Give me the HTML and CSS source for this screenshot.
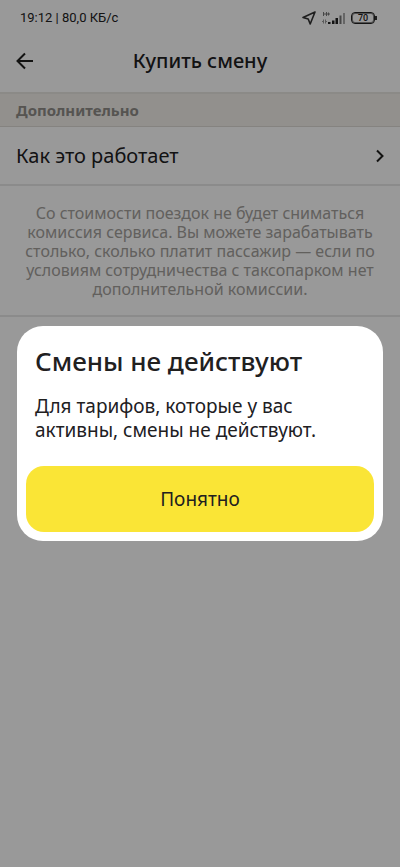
FILE: index.html
```html
<!DOCTYPE html>
<html lang="ru">
<head>
    <meta charset="UTF-8">
    <meta name="viewport" content="width=device-width, initial-scale=1.0">
    <title>Купить смену</title>
    <link rel="stylesheet" href="styles.css">
</head>
<body>
    <div class="status-bar">
        <span>19:12 | 80,0 КБ/с</span>
        <div class="status-icons">
            <svg width="14" height="14" viewBox="0 0 14 14" fill="none" stroke="#333" stroke-width="1.6" stroke-linejoin="round">
                <path d="M13 1L1 6.400L6.200 8L8.200 13Z"/>
            </svg>
            <svg width="25" height="14" viewBox="0 0 25 14">
                <path d="M2.500 1v4M5.500 1v4M2.500 3h6.500M7.500 1.500v3" fill="none" stroke="#777" stroke-width="1"/>
                <path d="M2.500 8.500v4M1 10.500h1.500M4.500 8.500v4M4.500 10.500h1.500" fill="none" stroke="#999" stroke-width="1"/>
                <path d="M7 11h2.500v2H7zM11 9.500h2.500v3.500H11zM14.500 7h2.500v6h-2.500z" fill="#222"/>
                <path d="M18.500 4.500h2v8.500h-2z" fill="#777"/>
                <path d="M22 2h2v11h-2z" fill="#aaa"/>
            </svg>
            <div class="battery">70</div>
        </div>
    </div>

    <header class="header">
        <button class="back" aria-label="Назад">
            <svg width="18" height="18" viewBox="0 0 18 18" fill="none" stroke="#21201f" stroke-width="2">
                <path d="M17 9H2M9 1.500L1.500 9L9 16.500"/>
            </svg>
        </button>
        <h1>Купить смену</h1>
    </header>

    <main>
        <h2 class="section-title">Дополнительно</h2>
        <a class="row" href="#">
            <span>Как это работает</span>
            <svg width="8" height="14" viewBox="0 0 8 14" fill="none" stroke="#21201f" stroke-width="2">
                <path d="M1 1.500L6.500 7L1 12.500"/>
            </svg>
        </a>
        <p class="note">Со стоимости поездок не будет сниматься комиссия сервиса. Вы можете зарабатывать столько, сколько платит пассажир — если по условиям сотрудничества с таксопарком нет дополнительной комиссии.</p>
    </main>

    <div class="overlay">
        <div class="modal" role="dialog" aria-labelledby="modalTitle">
            <h2 id="modalTitle">Смены не действуют</h2>
            <p>Для тарифов, которые у вас активны, смены не действуют.</p>
            <button class="confirm">Понятно</button>
        </div>
    </div>
</body>
</html>
```
FILE: styles.css
```css
* {
    box-sizing: border-box;
    margin: 0;
    padding: 0;
}

body {
    background: #fff;
    color: #21201f;
    font-family: "Noto Sans", sans-serif;
}

.status-bar {
    display: flex;
    justify-content: space-between;
    align-items: center;
    height: 35px;
    padding: 0 25px 0 20px;
    font-family: Roboto, sans-serif;
    font-size: 13px;
    color: #222;
}

.status-icons {
    display: flex;
    align-items: center;
    gap: 5px;
}

.battery {
    position: relative;
    width: 24px;
    height: 12px;
    border: 1px solid #222;
    border-radius: 4px;
    box-shadow: inset 0 0 0 1px #888;
    font-size: 9px;
    font-weight: 500;
    line-height: 10px;
    text-align: center;
}

.battery::after {
    content: "";
    position: absolute;
    top: 3px;
    right: -3px;
    width: 2px;
    height: 4px;
    background: #333;
}

.header {
    display: grid;
    grid-template-columns: 18px 1fr 18px;
    align-items: center;
    height: 57px;
    padding: 0 16px 5px;
}

.header h1 {
    font-size: 20px;
    font-weight: 500;
    line-height: 24px;
    text-align: center;
}

.back {
    display: flex;
    border: none;
    background: none;
    cursor: pointer;
}

.section-title {
    padding: 5px 16px;
    border-top: 2px solid #e8e6e2;
    border-bottom: 1px solid #dedbd6;
    background: #f3f1ec;
    color: #8f8c88;
    font-size: 15px;
    font-weight: 700;
    line-height: 22px;
}

.row {
    display: flex;
    justify-content: space-between;
    align-items: center;
    height: 59px;
    padding: 0 16px;
    border-bottom: 2px solid #e8e8e8;
    color: #21201f;
    font-size: 20px;
    text-decoration: none;
}

.note {
    padding: 18px 20px 16px;
    border-bottom: 2px solid #e8e8e8;
    color: #a3a09c;
    font-size: 16px;
    line-height: 19px;
    text-align: center;
}

.overlay {
    position: fixed;
    inset: 0;
    display: flex;
    align-items: center;
    padding: 0 17px;
    background: rgba(0, 0, 0, 0.4);
}

.modal {
    width: 100%;
    padding: 16px 9px 9px;
    border-radius: 26px;
    background: #fff;
}

.modal h2 {
    padding: 0 9px;
    font-size: 26px;
    font-weight: 500;
    line-height: 38px;
}

.modal p {
    padding: 14px 24px 24px 9px;
    font-size: 19px;
    line-height: 24px;
}

.confirm {
    width: 100%;
    height: 66px;
    border: none;
    border-radius: 18px;
    background: #fae536;
    color: #21201f;
    font-family: inherit;
    font-size: 19px;
    cursor: pointer;
}
```
